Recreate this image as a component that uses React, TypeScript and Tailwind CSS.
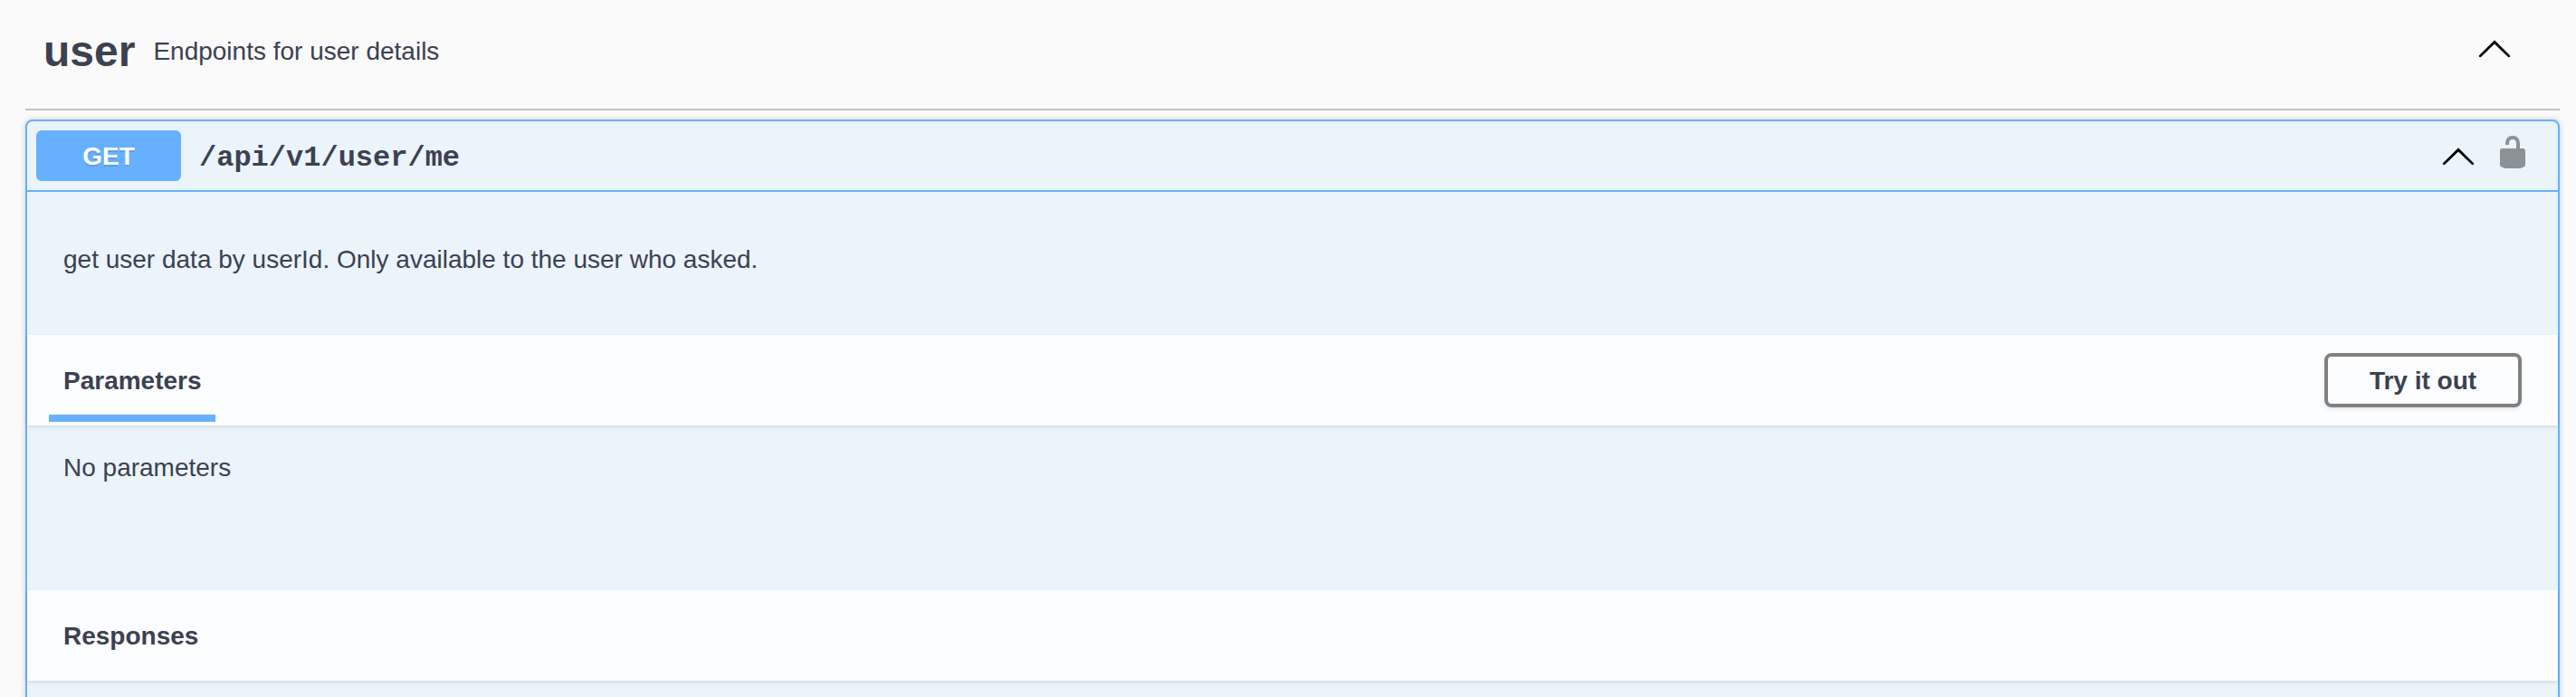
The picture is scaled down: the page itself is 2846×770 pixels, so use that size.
import type { ReactNode } from "react";

function ArrowUp() {
  return (
    <svg className="block size-10" viewBox="0 0 20 20" fill="#000">
      <path d="M 17.418 14.908 C 17.69 15.176 18.127 15.176 18.397 14.908 C 18.667 14.64 18.668 14.207 18.397 13.939 L 10.489 6.109 C 10.219 5.841 9.782 5.841 9.51 6.109 L 1.602 13.939 C 1.332 14.207 1.332 14.64 1.602 14.908 C 1.873 15.176 2.311 15.176 2.581 14.908 L 10 7.767 L 17.418 14.908 Z" />
    </svg>
  );
}

function Unlocked() {
  return (
    <svg className="block size-10 opacity-40" viewBox="0 0 20 20" fill="#000">
      <path d="M15.8 8H14V5.6C14 2.703 12.665 1 10 1 7.334 1 6 2.703 6 5.6V6h2v-.801C8 3.754 8.797 3 10 3c1.203 0 2 .754 2 2.199V8H4c-.553 0-1 .646-1 1.199V17c0 .549.428 1.139.951 1.307l1.197.387C5.672 18.861 6.55 19 7.1 19h5.8c.549 0 1.428-.139 1.951-.307l1.196-.387c.524-.167.953-.757.953-1.306V9.199C17 8.646 16.352 8 15.8 8z" />
    </svg>
  );
}

function SectionHeader({ children }: { children: ReactNode }) {
  return (
    <div className="flex h-[100px] items-center justify-between bg-[#fcfdff] pr-[40px] pl-6 shadow-[0_2px_4px_rgba(0,0,0,0.1)]">
      {children}
    </div>
  );
}

export default function App() {
  return (
    <div className="h-[770px] overflow-hidden bg-[#fafafa] pr-[18px] pl-7 font-['Liberation_Sans',Arial,sans-serif] text-[28px] leading-8 text-[#3b4151]">
      <header className="flex h-[122px] items-start border-b-2 border-[#c1c2c5] pr-[52px] pl-5">
        <h2 className="pt-[29px] text-[48px] leading-[56px] font-bold">user</h2>
        <p className="grow pt-[41px] pl-5">Endpoints for user details</p>
        <button className="pt-[33px]" aria-label="Collapse user">
          <ArrowUp />
        </button>
      </header>

      <section className="mt-[10px] h-[700px] rounded-lg border-2 border-[#66b0ff] bg-[#ebf3fb] shadow-[0_0_6px_rgba(0,0,0,0.19)]">
        <div className="flex h-[78px] items-center border-b-2 border-[#66b0ff] pr-[30px] pl-[10px]">
          <span className="flex h-14 w-40 items-center justify-center rounded-md bg-[#66b0ff] pt-0.5 font-bold text-white [text-shadow:0_2px_0_rgba(0,0,0,0.1)]">
            GET
          </span>
          <span className="grow pt-[5px] pl-5 font-['Liberation_Mono','Courier_New',monospace] text-[32px] leading-9 font-bold">
            /api/v1/user/me
          </span>
          <button className="mr-5" aria-label="Collapse operation">
            <ArrowUp />
          </button>
          <button className="mb-2" aria-label="Authorize">
            <Unlocked />
          </button>
        </div>

        <p className="h-[158px] pt-[59px] pl-10">
          get user data by userId. Only available to the user who asked.
        </p>

        <SectionHeader>
          <div className="flex h-full w-[184px] flex-col justify-end pb-1">
            <h4 className="pb-[21px] pl-4 font-bold">Parameters</h4>
            <div className="h-2 bg-[#66b0ff]" />
          </div>
          <button className="flex h-[60px] w-[218px] items-center justify-center rounded-lg border-4 border-[#808080] pt-0.5 font-bold shadow-[0_2px_4px_rgba(0,0,0,0.1)]">
            Try it out
          </button>
        </SectionHeader>

        <p className="h-[182px] pt-[31px] pl-10">No parameters</p>

        <SectionHeader>
          <h4 className="pt-0.5 pl-4 font-bold">Responses</h4>
        </SectionHeader>
      </section>
    </div>
  );
}
